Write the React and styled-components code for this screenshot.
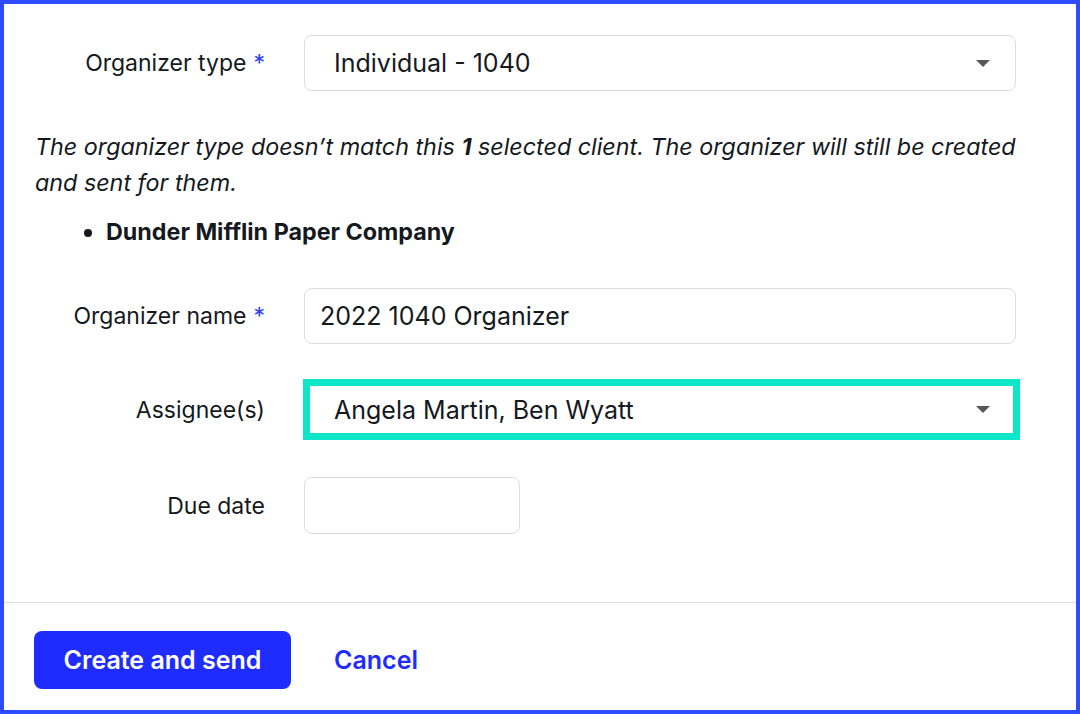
import React from 'react';
import styled, { createGlobalStyle } from 'styled-components';

const GlobalStyle = createGlobalStyle`
	html, body {
		margin: 0;
		padding: 0;
		background: #ffffff;
	}
	* {
		box-sizing: border-box;
	}
`;

const Frame = styled.div`
	display: flex;
	flex-direction: column;
	width: 1080px;
	height: 714px;
	border: 4px solid #2e4bff;
	font-family: Inter, "Noto Sans", sans-serif;
	color: #15191e;
	background: #fff;
`;

const Body = styled.div`
	flex: 1;
	padding: 31px 40px 0 30px;
`;

const Row = styled.div`
	display: grid;
	grid-template-columns: 231px 712px;
	column-gap: 39px;
	align-items: center;
	margin-top: ${(p) => p.gap || 0}px;
`;

const Label = styled.label`
	font-size: 23px;
	text-align: right;
	white-space: nowrap;
`;

const Required = styled.span`
	color: #2b3bff;
	margin-left: 7px;
`;

const Select = styled.div`
	display: flex;
	align-items: center;
	width: ${(p) => (p.highlight ? '717px' : '712px')};
	height: ${(p) => (p.highlight ? '61px' : '56px')};
	margin-left: ${(p) => (p.highlight ? '-1px' : '0')};
	padding-left: ${(p) => (p.highlight ? '24px' : '29px')};
	padding-right: ${(p) => (p.highlight ? '23px' : '25px')};
	border: ${(p) => (p.highlight ? '7px solid #0de6c8' : '1px solid #dcdcdc')};
	border-radius: ${(p) => (p.highlight ? '0' : '8px')};
	font-size: 25px;
	background: #fff;
`;

const SelectValue = styled.span`
	flex: 1;
`;

const Caret = styled.span`
	width: 0;
	height: 0;
	border-left: 7.5px solid transparent;
	border-right: 7.5px solid transparent;
	border-top: 7px solid #55575c;
`;

const Input = styled.div`
	display: flex;
	align-items: center;
	width: ${(p) => p.width || 712}px;
	height: ${(p) => p.height || 56}px;
	padding-left: 15px;
	border: 1px solid #dcdcdc;
	border-radius: 8px;
	font-size: 25px;
`;

const Note = styled.p`
	margin: 38px 0 0 1px;
	font-size: 23.3px;
	font-style: italic;
	line-height: 36px;
	width: 1000px;
`;

const Clients = styled.ul`
	margin: 13px 0 0 0;
	padding-left: 72px;
	font-size: 23.3px;
	font-weight: 700;
	line-height: 36px;
`;

const Footer = styled.div`
	display: flex;
	align-items: center;
	gap: 43px;
	padding: 28px 30px 21px;
	border-top: 1px solid #dedede;
`;

const PrimaryButton = styled.button`
	height: 58px;
	width: 257px;
	border: none;
	border-radius: 8px;
	background: #1f2cff;
	color: #fff;
	font-family: Inter, "Noto Sans", sans-serif;
	font-size: 25px;
	font-weight: 600;
	cursor: pointer;
`;

const LinkButton = styled.button`
	border: none;
	background: none;
	padding: 0;
	color: #1f2cff;
	font-family: Inter, "Noto Sans", sans-serif;
	font-size: 25px;
	font-weight: 600;
	cursor: pointer;
`;

export default function App() {
	return (
		<>
			<GlobalStyle />
			<Frame>
				<Body>
					<Row>
						<Label>Organizer type<Required>*</Required></Label>
						<Select>
							<SelectValue>Individual - 1040</SelectValue>
							<Caret />
						</Select>
					</Row>

					<Note>
						The organizer type doesn’t match this <b>1</b> selected client. The organizer will still be created
						and sent for them.
					</Note>
					<Clients>
						<li>Dunder Mifflin Paper Company</li>
					</Clients>

					<Row gap={38}>
						<Label>Organizer name<Required>*</Required></Label>
						<Input>2022 1040 Organizer</Input>
					</Row>

					<Row gap={35}>
						<Label>Assignee(s)</Label>
						<Select highlight>
							<SelectValue>Angela Martin, Ben Wyatt</SelectValue>
							<Caret />
						</Select>
					</Row>

					<Row gap={37}>
						<Label>Due date</Label>
						<Input width={216} height={57} />
					</Row>
				</Body>
				<Footer>
					<PrimaryButton>Create and send</PrimaryButton>
					<LinkButton>Cancel</LinkButton>
				</Footer>
			</Frame>
		</>
	);
}
